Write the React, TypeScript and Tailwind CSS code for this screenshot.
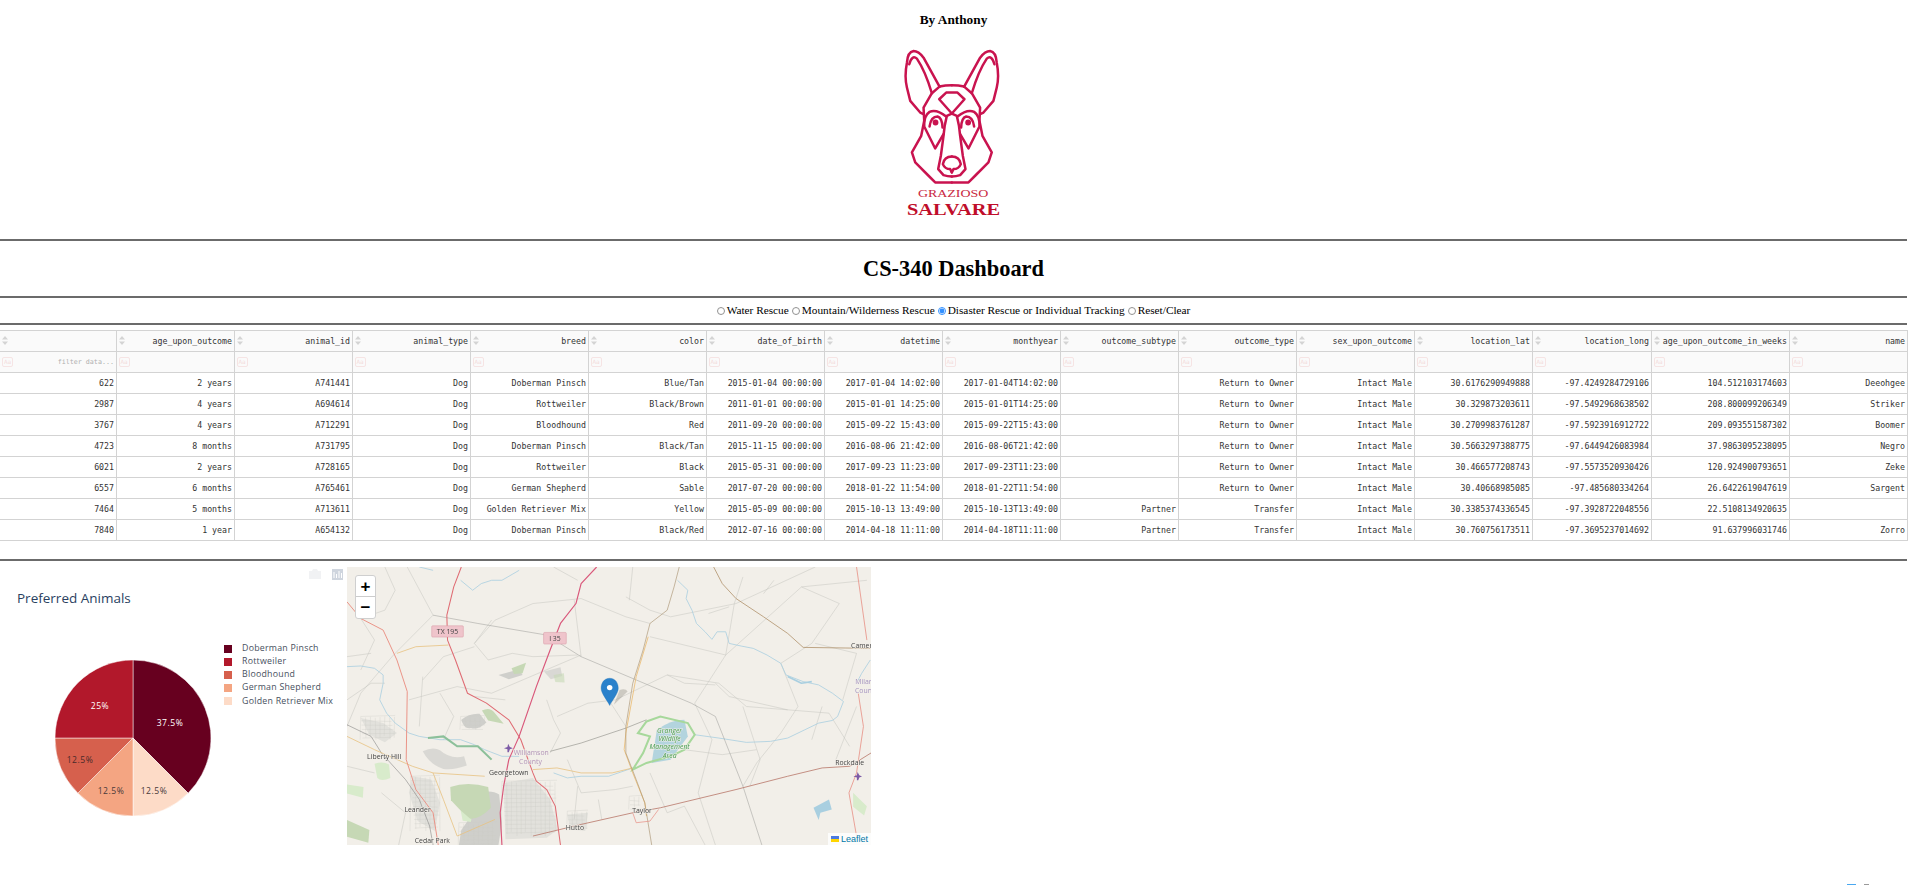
import React from 'react';

const columns = ['', 'age_upon_outcome', 'animal_id', 'animal_type', 'breed', 'color', 'date_of_birth', 'datetime', 'monthyear', 'outcome_subtype', 'outcome_type', 'sex_upon_outcome', 'location_lat', 'location_long', 'age_upon_outcome_in_weeks', 'name'];

const widths = [116, 118, 118, 118, 118, 118, 118, 118, 118, 118, 118, 118, 118, 119, 138, 118];

const rows = [
    ['622', '2 years', 'A741441', 'Dog', 'Doberman Pinsch', 'Blue/Tan', '2015-01-04 00:00:00', '2017-01-04 14:02:00', '2017-01-04T14:02:00', '', 'Return to Owner', 'Intact Male', '30.6176290949888', '-97.4249284729106', '104.512103174603', 'Deeohgee'],
    ['2987', '4 years', 'A694614', 'Dog', 'Rottweiler', 'Black/Brown', '2011-01-01 00:00:00', '2015-01-01 14:25:00', '2015-01-01T14:25:00', '', 'Return to Owner', 'Intact Male', '30.329873203611', '-97.5492968638502', '208.800099206349', 'Striker'],
    ['3767', '4 years', 'A712291', 'Dog', 'Bloodhound', 'Red', '2011-09-20 00:00:00', '2015-09-22 15:43:00', '2015-09-22T15:43:00', '', 'Return to Owner', 'Intact Male', '30.2709983761287', '-97.5923916912722', '209.093551587302', 'Boomer'],
    ['4723', '8 months', 'A731795', 'Dog', 'Doberman Pinsch', 'Black/Tan', '2015-11-15 00:00:00', '2016-08-06 21:42:00', '2016-08-06T21:42:00', '', 'Return to Owner', 'Intact Male', '30.5663297388775', '-97.6449426083984', '37.9863095238095', 'Negro'],
    ['6021', '2 years', 'A728165', 'Dog', 'Rottweiler', 'Black', '2015-05-31 00:00:00', '2017-09-23 11:23:00', '2017-09-23T11:23:00', '', 'Return to Owner', 'Intact Male', '30.466577208743', '-97.5573520930426', '120.924900793651', 'Zeke'],
    ['6557', '6 months', 'A765461', 'Dog', 'German Shepherd', 'Sable', '2017-07-20 00:00:00', '2018-01-22 11:54:00', '2018-01-22T11:54:00', '', 'Return to Owner', 'Intact Male', '30.40668985085', '-97.485680334264', '26.6422619047619', 'Sargent'],
    ['7464', '5 months', 'A713611', 'Dog', 'Golden Retriever Mix', 'Yellow', '2015-05-09 00:00:00', '2015-10-13 13:49:00', '2015-10-13T13:49:00', 'Partner', 'Transfer', 'Intact Male', '30.3385374336545', '-97.3928722048556', '22.5108134920635', ''],
    ['7840', '1 year', 'A654132', 'Dog', 'Doberman Pinsch', 'Black/Red', '2012-07-16 00:00:00', '2014-04-18 11:11:00', '2014-04-18T11:11:00', 'Partner', 'Transfer', 'Intact Male', '30.760756173511', '-97.3695237014692', '91.637996031746', 'Zorro'],
];

const legend = [
    ['Doberman Pinsch', 'bg-[#67001f]'],
    ['Rottweiler', 'bg-[#b2182b]'],
    ['Bloodhound', 'bg-[#d6604d]'],
    ['German Shepherd', 'bg-[#f4a582]'],
    ['Golden Retriever Mix', 'bg-[#fddbc7]'],
];

// city street blocks on the map: x, y, w, h
const cityBlocks = [
    [470, 665, 160, 165],
    [205, 650, 85, 165],
    [345, 790, 110, 67],
    [660, 755, 60, 60],
    [60, 470, 100, 70],
    [350, 470, 70, 40],
    [840, 710, 40, 40],
];

// jittered street lines so the towns read as a fine mesh and not as flat blobs
const streets = (x: number, y: number, w: number, h: number) => {
    let d = '';
    for (let i = 0; i <= w; i += 14) {
        const j = (i * 7) % 5;
        d += `M${x + i} ${y + j}L${x + i + j - 2} ${y + h - ((i * 3) % 18)}`;
    }
    for (let i = 0; i <= h; i += 13) {
        const j = (i * 11) % 6;
        d += `M${x + ((i * 5) % 16)} ${y + i}L${x + w - ((i * 3) % 14)} ${y + i + j - 3}`;
    }
    return d;
};

const Rule = () => <div className="h-[2px] w-[1907px] bg-[#6b6b6b]" />;

const SortIcon = () => (
    <svg width="6" height="9" viewBox="0 0 6 9" className="absolute left-[2px] top-[5px]">
        <path d="M3 0L6 3.4H0Z M3 9L0 5.6H6Z" fill="#d4d4d4" />
    </svg>
);

const DogHalf = () => (
    <g>
        <path d="M238 262L190 175Q175 155 160 155Q142 158 140 190Q132 230 140 265L150 305L180 340L190 345" />
        <path d="M215 282Q195 215 170 178Q155 165 147 195" />
        <path d="M238 262Q255 258 275 258" />
        <path d="M238 262L215 282L190 325L192 365L183 410L155 460L165 490L205 530L225 550H275" />
        <path d="M275 343L260 350Q252 380 250 410L242 470L234 510L250 528Q262 532 275 532" />
        <path d="M275 472Q252 472 248 495Q254 510 270 510L275 520" />
        <path d="M258 352Q228 328 208 338Q190 350 192 382L225 448L250 405" />
        <path d="M208 382Q212 352 232 352Q246 356 247 385" />
        <circle cx="226" cy="370" r="5" fill="#c9134f" />
    </g>
);

const Logo = () => (
    <svg width="107" height="173" viewBox="120 140 320 520" className="mt-[19px]">
        <g fill="none" stroke="#c9134f" strokeWidth="7.5" strokeLinejoin="round" strokeLinecap="round">
            <DogHalf />
            <g transform="translate(550 0) scale(-1 1)">
                <DogHalf />
            </g>
            <path d="M237 300L258 280H292L313 300L275 343Z" />
        </g>
        <text x="279" y="593" textAnchor="middle" textLength="212" lengthAdjust="spacingAndGlyphs" fontFamily="Liberation Serif, serif" fontSize="31" fill="#c9283f">GRAZIOSO</text>
        <text x="280" y="647" textAnchor="middle" textLength="280" lengthAdjust="spacingAndGlyphs" fontFamily="Liberation Serif, serif" fontSize="48" fontWeight="bold" fill="#c00d2a">SALVARE</text>
    </svg>
);

const PieChart = () => (
    <svg width="160" height="160" viewBox="53 658 160 160" className="shrink-0">
        <g stroke="#ffffff" strokeWidth="0.5">
            <path d="M133 738V660A78 78 0 0 1 188.15 793.15Z" fill="#67001f" />
            <path d="M133 738L188.15 793.15A78 78 0 0 1 133 816Z" fill="#fddbc7" />
            <path d="M133 738V816A78 78 0 0 1 77.85 793.15Z" fill="#f4a582" />
            <path d="M133 738L77.85 793.15A78 78 0 0 1 55 738Z" fill="#d6604d" />
            <path d="M133 738H55A78 78 0 0 1 133 660Z" fill="#b2182b" />
        </g>
        <g fontFamily="Open Sans, sans-serif" fontSize="8.6" letterSpacing="0.5" textAnchor="middle">
            <text x="170" y="726" fill="#ffffff">37.5%</text>
            <text x="100" y="709" fill="#ffffff">25%</text>
            <text x="80" y="763" fill="#4a2a2a">12.5%</text>
            <text x="111" y="794" fill="#4a3a3a">12.5%</text>
            <text x="154" y="794" fill="#4a3a3a">12.5%</text>
        </g>
    </svg>
);

const MapLabel = ({ x, y, children, color = '#444444', italic = false }: { x: number; y: number; children: string; color?: string; italic?: boolean }) => (
    <text x={x} y={y} textAnchor="middle" fontFamily="Open Sans, sans-serif" fontSize="20" fontStyle={italic ? 'italic' : 'normal'} fill={color} stroke="#f2efe9" strokeWidth="3" paintOrder="stroke">
        {children}
    </text>
);

const MapDrawing = () => (
    <svg viewBox="20 20 1522 837" preserveAspectRatio="none" className="h-full w-full blur-[0.35px]">
        <rect x="20" y="20" width="1522" height="837" fill="#f2efe9" />
        {/* built up areas */}
        <g fill="#e2e1dc">
            <path d="M475 670L560 655L610 720L632 810L600 835L480 840Z" />
            <path d="M210 650L265 660L290 730L275 815L225 785L200 700Z" />
            <path d="M660 765L720 760L712 815L668 810Z" />
            <path d="M60 475L125 490L165 520L130 548L85 525Z" />
        </g>
        <g fill="#cfcfcb">
            <path d="M352 480Q375 460 405 462L425 488Q400 512 380 505Q360 510 352 480Z" />
            <path d="M240 575Q270 560 290 572Q320 600 360 590L368 618Q330 632 300 628Q260 615 240 575Z" opacity="0.7" />
            <path d="M405 700Q440 690 462 705L470 790L460 857H345L352 812Q385 770 405 700Z" />
            <path d="M460 345L520 328L530 345L490 358Z" />
            <path d="M592 335L640 322L645 348L612 358Z" opacity="0.7" />
        </g>
        <g fill="#d8ebcb">
            <path d="M100 612Q125 604 142 615L146 655Q120 668 108 655Z" />
            <path d="M20 675L68 682L66 715L20 702Z" />
            <path d="M350 752Q370 745 384 755L380 788L356 784Z" />
            <path d="M1490 700L1530 740L1522 768L1490 742Z" />
        </g>
        <g fill="#c6d8b5">
            <path d="M320 682Q370 665 430 682L438 745Q405 780 378 778Q345 750 322 722Z" />
            <path d="M412 452Q435 440 448 458L475 492L430 482Z" />
            <path d="M498 325L540 308L530 340L505 342Z" />
            <path d="M20 782L85 812L82 850L20 832Z" />
            <path d="M620 345L650 340L652 368L625 366Z" opacity="0.6" />
        </g>
        {/* thin boundaries */}
        <g fill="none" stroke="#c6c6c0" strokeWidth="1.5">
            <path d="M130 20L160 90L130 150L60 175" />
            <path d="M195 20L270 165L155 285L60 400L20 500" />
            <path d="M390 250L450 180L560 130L700 115L830 170L900 190" />
            <path d="M240 360L300 290L390 260" />
            <path d="M200 420L340 380L440 400L700 285" />
            <path d="M230 500L240 350M290 400L330 470M390 410L480 420" />
            <path d="M600 420L620 480L640 520L610 580M630 470L720 430L800 420L950 345L1100 370L1180 440L1420 460L1480 560" />
            <path d="M680 120L700 290M830 110L900 150L960 170L1150 130L1380 20" />
            <path d="M900 230L1120 285L1030 430L1080 540L1040 700L1090 857" />
            <path d="M1120 285L1340 80L1450 130L1370 250L1280 310L1330 440L1280 520L1210 610L1170 680" />
            <path d="M1170 440L1220 600L1190 680M1400 440L1370 540M1500 440L1440 600" />
            <path d="M900 640L950 760L1000 740L1060 857M700 700L800 690L850 680M760 780L750 720M690 680L680 780" />
            <path d="M1130 140L1070 160M1170 50L1145 130L1120 285M1260 60L1230 100" />
            <path d="M20 420L90 370L130 370M20 290L90 280M660 600L700 700" />
            <path d="M620 20L690 60M850 20L840 120M440 180L390 250L430 300L500 280L560 290L690 285" />
            <path d="M1090 370L1130 410L1300 450M1340 80L1530 60M1380 250L1500 280L1460 420" />
            <path d="M120 700L190 760L170 857M20 620L100 640M330 470L300 540M60 175L100 240L60 330" />
            <path d="M1000 570L1110 585L1210 570M780 420L830 500M950 345L1000 370L1090 375" />
        </g>
        {/* streets in the towns */}
        <g fill="none" stroke="#cbcbc5" strokeWidth="1">
            {cityBlocks.map(([x, y, w, h]) => (
                <path key={`${x}-${y}`} d={streets(x, y, w, h)} />
            ))}
        </g>
        {/* water */}
        <g fill="none" stroke="#a9cfe0" strokeWidth="2.4" strokeLinejoin="round">
            <path d="M980 60L995 75L1010 90L1005 115L1022 150L1035 190L1060 215L1080 238L1095 215L1120 215L1130 250L1165 258L1200 265L1240 285L1280 310L1295 345L1345 365L1390 375L1430 400L1462 425L1445 470L1430 482L1390 490L1350 510L1300 535L1250 545L1180 548L1100 535L1030 525" />
            <path d="M1300 350L1340 370L1370 365" strokeWidth="5" />
            <path d="M20 320L60 318L100 325L125 345L125 370L115 420L135 460L160 490L200 520L230 530L290 540L350 540L390 555L420 570L470 590L520 590" />
            <path d="M620 640L660 655L700 650L780 650L850 625" />
            <path d="M230 20L270 30M350 60L385 90L410 70L440 60L470 60L520 30" />
            <path d="M1540 300L1515 340L1500 370" />
        </g>
        <path d="M1375 745L1420 720L1428 750L1395 760L1390 782Z" fill="#a9cfe0" />
        <path d="M920 510Q960 480 1000 480L1010 530L960 600L905 610Z" fill="#b3d4de" />
        <path d="M890 485L930 470L1010 490L1030 525L1000 570L960 590L890 610L850 630L880 580L900 530L865 520Z" fill="none" stroke="#a7d89b" strokeWidth="6" />
        <path d="M255 535L300 530L340 560L400 560L440 600" fill="none" stroke="#8cc09a" strokeWidth="6" />
        {/* roads */}
        <g fill="none" strokeLinejoin="round">
            <path d="M270 165L400 190L600 225L700 290L860 360L1020 430L1090 470L1170 680L1225 857" stroke="#a0a09c" strokeWidth="1.6" />
            <path d="M610 575L700 550L830 505L890 480" stroke="#8d8d86" strokeWidth="1.8" />
            <path d="M20 495L90 530L120 580L190 660L230 720L260 800L270 857" stroke="#7d7d7d" strokeWidth="1.6" />
            <path d="M165 280L220 260L315 255" stroke="#e8c282" strokeWidth="2.4" />
            <path d="M20 530L100 570L210 620L270 640L420 650" stroke="#e8c282" strokeWidth="2.4" />
            <path d="M270 640L300 720L340 830M340 830L450 780M560 630L630 625L700 640L790 640L850 625" stroke="#e8c282" strokeWidth="2.4" />
            <path d="M895 230L860 350L830 520L825 570L850 640L885 730L890 770" stroke="#ecbf7a" strokeWidth="2.6" />
            <path d="M985 20L970 80L950 150L900 190L880 270L850 370L830 500L830 580L860 660L885 730L905 857" stroke="#a68e6c" strokeWidth="1.8" />
            <path d="M1085 20L1110 70L1150 115L1230 170L1300 220L1345 262L1540 265" stroke="#ab8b62" strokeWidth="2.2" />
            <path d="M560 830L700 795L850 760L930 745L1150 690L1300 650L1400 625L1480 620L1542 580" stroke="#b9786a" strokeWidth="2.4" />
            <path d="M850 760L860 790L900 785L925 750" stroke="#e88a80" strokeWidth="2" />
            <path d="M1500 20L1530 240M1505 400L1520 500L1500 640L1478 700L1500 830" stroke="#e88f84" strokeWidth="2.4" />
            <path d="M20 125L60 175L125 210L165 300L195 395L192 600L220 690L270 760L285 857" stroke="#ea8f82" strokeWidth="2.8" />
            <path d="M352 20L330 80L310 165L312 240L335 300L370 400L425 430L490 480L525 540L560 640L570 665L600 690L625 740L640 857" stroke="#df6a72" strokeWidth="3" />
            <path d="M745 20L700 70L685 130L640 190L610 270L570 380L520 530L490 600L475 680L465 760L470 857" stroke="#d9577a" strokeWidth="3.4" />
        </g>
        {/* shields */}
        <g stroke="#d99aa5" strokeWidth="1.5" fill="#efc4cb">
            <rect x="266" y="197" width="92" height="34" rx="3" />
            <rect x="591" y="217" width="66" height="35" rx="3" />
        </g>
        <g fontFamily="Open Sans, sans-serif" fontSize="20" fill="#444444" textAnchor="middle">
            <text x="312" y="221">TX 195</text>
            <text x="624" y="243">I 35</text>
        </g>
        <MapLabel x={128} y={598}>Liberty Hill</MapLabel>
        <MapLabel x={490} y={647}>Georgetown</MapLabel>
        <MapLabel x={225} y={759}>Leander</MapLabel>
        <MapLabel x={268} y={850}>Cedar Park</MapLabel>
        <MapLabel x={682} y={812}>Hutto</MapLabel>
        <MapLabel x={877} y={760}>Taylor</MapLabel>
        <MapLabel x={1480} y={615}>Rockdale</MapLabel>
        <MapLabel x={1515} y={264}>Camer</MapLabel>
        <MapLabel x={555} y={587} color="#b294b8">Williamson</MapLabel>
        <MapLabel x={553} y={612} color="#b294b8">County</MapLabel>
        <MapLabel x={1520} y={372} color="#a594c0">Milar</MapLabel>
        <MapLabel x={1520} y={398} color="#a594c0">Coun</MapLabel>
        <MapLabel x={957} y={519} color="#3f9a4e" italic>Granger</MapLabel>
        <MapLabel x={957} y={544} color="#3f9a4e" italic>Wildlife</MapLabel>
        <MapLabel x={957} y={569} color="#3f9a4e" italic>Management</MapLabel>
        <MapLabel x={957} y={594} color="#3f9a4e" italic>Area</MapLabel>
        {/* airports */}
        <path d="M488 552L493 562L502 566L493 569L490 578L486 578L486 569L476 566L486 562Z" fill="#7d5ba6" />
        <path d="M1503 637L1508 647L1516 651L1508 654L1505 662L1501 662L1501 654L1491 651L1501 647Z" fill="#7d5ba6" />
        {/* marker */}
        <path d="M795 435L835 395Q830 385 812 390Z" fill="#77736a" opacity="0.3" />
        <path d="M783 355C765 355 758 372 758 385C758 400 775 420 783 437C791 420 808 400 808 385C808 372 801 355 783 355Z" fill="#2a81cb" stroke="#2274b8" strokeWidth="1" />
        <ellipse cx="783" cy="383" rx="8" ry="8" fill="#ffffff" />
    </svg>
);

const App: React.FC = () => {
    return (
        <div className="relative h-[885px] w-full overflow-hidden bg-white font-['Liberation_Serif',serif] text-black">
            <div className="flex h-[239px] w-[1907px] flex-col items-center pt-[12px]">
                <p className="text-[13.3px] font-bold leading-[15px]">By Anthony</p>
                <Logo />
            </div>
            <Rule />
            <div className="flex h-[55px] w-[1907px] items-center justify-center pt-[1px]">
                <h1 className="text-[22.4px] font-bold leading-none">CS-340 Dashboard</h1>
            </div>
            <Rule />
            <div className="flex h-[25px] w-[1907px] items-center justify-center gap-[3px] text-[11.3px]">
                {['Water Rescue', 'Mountain/Wilderness Rescue', 'Disaster Rescue or Individual Tracking', 'Reset/Clear'].map((label, i) => (
                    <label key={label} className="flex items-center gap-[2px]">
                        <input type="radio" name="filter" readOnly checked={i === 2} className="m-0 h-[8px] w-[8px] accent-[#0075ff] opacity-80" />
                        {label}
                    </label>
                ))}
            </div>
            <Rule />
            <div className="h-[5px]" />
            <table className="w-[1907px] table-fixed border-collapse font-['DejaVu_Sans_Mono',monospace] text-[8.25px] text-[#333333]">
                <colgroup>
                    {widths.map((w, i) => (
                        <col key={i} style={{ width: w }} />
                    ))}
                </colgroup>
                <thead>
                    <tr className="h-[21px] bg-[#fafafa]">
                        {columns.map((c, i) => (
                            <th key={i} className="relative border border-l-0 border-[#d3d3d3] pr-[1.5px] text-right font-normal">
                                <SortIcon />
                                {c}
                            </th>
                        ))}
                    </tr>
                    <tr className="h-[21px] bg-[#fafafa]">
                        {columns.map((c, i) => (
                            <th key={i} className="relative border border-l-0 border-[#d3d3d3] pr-[1.5px] text-right text-[6.7px] font-normal text-[#b0b0b0]">
                                <span className="absolute left-[2px] top-[5px] rounded-[2px] border border-[#f6e4e4] px-[1px] text-[6px] leading-[8px] text-[#f3dada]">Aa</span>
                                {i === 0 ? 'filter data...' : ''}
                            </th>
                        ))}
                    </tr>
                </thead>
                <tbody>
                    {rows.map((row) => (
                        <tr key={row[0]} className="h-[21px]">
                            {row.map((cell, i) => (
                                <td key={i} className="border border-l-0 border-[#d3d3d3] pr-[1.5px] text-right whitespace-nowrap">
                                    {cell}
                                </td>
                            ))}
                        </tr>
                    ))}
                </tbody>
            </table>
            <div className="h-[18px]" />
            <Rule />
            <div className="mt-[6px] flex w-[1907px]">
                <div className="relative h-[278px] w-[347px] shrink-0 font-['Open_Sans',sans-serif] text-[#2a3f5f]">
                    <div className="absolute right-[4px] top-[2px] flex gap-[11px]">
                        <svg width="12" height="10" viewBox="0 0 12 10"><path d="M0 2H3L4 0H8L9 2H12V10H0Z" fill="#f1f2f4" /></svg>
                        <svg width="11" height="11" viewBox="0 0 11 11"><rect width="11" height="11" fill="#cfd5de" /><path d="M2 3V9M4.5 5V9M7 2V9M9.5 4V9" stroke="#ffffff" /></svg>
                    </div>
                    <p className="pl-[17px] pt-[22px] text-[13.5px] leading-[18px]">Preferred Animals</p>
                    <div className="mt-[36px] flex items-start">
                        <div className="mt-[15px] pl-[53px]">
                            <PieChart />
                        </div>
                        <ul className="ml-[11px] flex flex-col gap-[2.2px] text-[8.8px] tracking-[0.25px] whitespace-nowrap text-[#47505e]">
                            {legend.map(([name, swatch]) => (
                                <li key={name} className="flex h-[11px] items-center gap-[10px]">
                                    <span className={`h-[8px] w-[8px] shrink-0 ${swatch}`} />
                                    {name}
                                </li>
                            ))}
                        </ul>
                    </div>
                </div>
                <div className="relative h-[278px] w-[524px] shrink-0 overflow-hidden">
                    <MapDrawing />
                    <div className="absolute left-[8px] top-[8px] flex w-[21px] flex-col overflow-hidden rounded-[3px] border border-[#cfcfcf] bg-white font-['Liberation_Sans',sans-serif] text-black">
                        <span className="flex h-[21px] items-center justify-center border-b border-[#cccccc] text-[17px] font-bold leading-none">+</span>
                        <span className="flex h-[21px] items-center justify-center text-[17px] font-bold leading-none">−</span>
                    </div>
                    <div className="absolute bottom-0 right-0 flex items-center gap-[2px] bg-white/80 px-[3px] font-['Liberation_Sans',sans-serif] text-[9px] leading-[12px] text-[#0078a8]">
                        <span className="flex h-[6px] w-[8px] flex-col">
                            <span className="h-[3px] bg-[#4c7be1]" />
                            <span className="h-[3px] bg-[#ffd500]" />
                        </span>
                        Leaflet
                    </div>
                </div>
            </div>
            <div className="absolute bottom-0 right-[42px] flex gap-[8px]">
                <span className="h-[1px] w-[9px] bg-[#4aa8f0]" />
                <span className="h-[1px] w-[5px] bg-[#9a9a9a]" />
            </div>
        </div>
    );
};

export default App;
